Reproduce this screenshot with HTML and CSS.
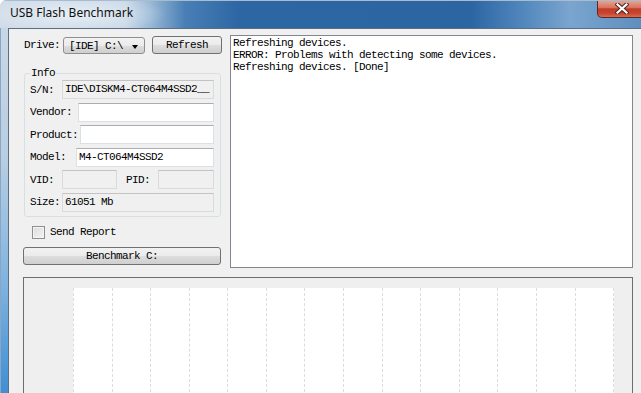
FILE: index.html
```html
<!DOCTYPE html>
<html>
<head>
<meta charset="utf-8">
<title>USB Flash Benchmark</title>
<link rel="stylesheet" href="styles.css">
</head>
<body>
<div class="window">
  <div class="titlebar">
    <span class="title">USB Flash Benchmark</span>
    <div class="close">
      <svg width="14" height="11" viewBox="0 0 14 11">
        <path d="M2.5 1.5 L11.5 9.5 M11.5 1.5 L2.5 9.5" stroke="#4b2620" stroke-width="4.2" stroke-linecap="square" fill="none"/>
        <path d="M2.5 1.5 L11.5 9.5 M11.5 1.5 L2.5 9.5" stroke="#ffffff" stroke-width="2.2" stroke-linecap="square" fill="none"/>
      </svg>
    </div>
  </div>
  <div class="frame">
    <div class="side"></div>
    <div class="client">
      <div class="top">
        <div class="left">
          <div class="drive-row">
            <span class="drive-lbl">Drive:</span>
            <div class="combo"><span class="combo-text">[IDE] C:\</span><span class="arrow"></span></div>
            <div class="btn refresh">Refresh</div>
          </div>
          <fieldset class="info">
            <legend>Info</legend>
            <div class="row"><span class="lbl w-sn">S/N:</span><div class="field ro">IDE\DISKM4-CT064M4SSD2__</div></div>
            <div class="row"><span class="lbl w-vendor">Vendor:</span><div class="field"></div></div>
            <div class="row"><span class="lbl w-product">Product:</span><div class="field"></div></div>
            <div class="row"><span class="lbl w-model">Model:</span><div class="field">M4-CT064M4SSD2</div></div>
            <div class="row"><span class="lbl w-sn">VID:</span><div class="field ro vid"></div><span class="lbl w-pid">PID:</span><div class="field ro"></div></div>
            <div class="row"><span class="lbl w-sn">Size:</span><div class="field ro">61051 Mb</div></div>
          </fieldset>
          <div class="check"><span class="box"></span><span>Send Report</span></div>
          <div class="btn bench">Benchmark C:</div>
        </div>
        <div class="log">
          <div class="line">Refreshing devices.</div>
          <div class="line">ERROR: Problems with detecting some devices.</div>
          <div class="line">Refreshing devices. [Done]</div>
        </div>
      </div>
      <div class="chart">
        <div class="plot">
          <div class="col"></div><div class="col"></div><div class="col"></div><div class="col"></div>
          <div class="col"></div><div class="col"></div><div class="col"></div><div class="col"></div>
          <div class="col"></div><div class="col"></div><div class="col"></div><div class="col"></div>
          <div class="col"></div><div class="col last"></div>
        </div>
      </div>
    </div>
  </div>
</div>
</body>
</html>
```

FILE: styles.css
```css
* { box-sizing: border-box; }

body {
  margin: 0;
  width: 641px;
  height: 393px;
  overflow: hidden;
  background: #ffffff;
  font-family: "Liberation Mono", monospace;
  font-size: 11px;
  letter-spacing: -0.6px;
  color: #000;
}

.window {
  display: flex;
  flex-direction: column;
  width: 641px;
  height: 393px;
  border-top-left-radius: 6px;
  overflow: hidden;
}

.titlebar {
  height: 28px;
  flex-shrink: 0;
  display: flex;
  align-items: flex-start;
  overflow: hidden;
  border-top: 1px solid #a9bccf;
  background:
    radial-gradient(ellipse 95px 20px at 72px 13px, rgba(236,242,248,0.85), rgba(236,242,248,0)),
    linear-gradient(to right, #cfdbe7 0px, #c7d7e6 125px, #9ab9d6 150px, #4a7fb5 185px, #2c66a3 240px, #2b65a2 470px, #4f85bb 520px, #7aa5cf 570px, #6e9bc8 600px, #5f8fbf 641px);
}

.title {
  font-family: "Segoe UI", "Noto Sans", sans-serif;
  font-size: 12px;
  letter-spacing: 0;
  line-height: 14px;
  padding: 5px 0 0 10px;
  color: #111;
}

.close {
  margin-left: auto;
  margin-right: -6px;
  margin-top: -1px;
  width: 50px;
  height: 18px;
  flex-shrink: 0;
  display: flex;
  align-items: center;
  justify-content: center;
  border: 1px solid #5b2a24;
  border-top: none;
  border-bottom-left-radius: 5px;
  background: linear-gradient(to bottom, #e7aa98 0%, #d7735f 45%, #c23b29 52%, #c9462f 80%, #d86c54 100%);
}

.frame {
  flex: 1;
  display: flex;
  min-height: 0;
}

.side {
  width: 8px;
  flex-shrink: 0;
  border-left: 1px solid #8aa6c2;
  background: linear-gradient(to bottom, #c8d7e6 0%, #b9cee2 35%, #7fb3e0 70%, #3f8fd4 100%);
}

.client {
  flex: 1;
  background: #f0f0f0;
  border-left: 1px solid #5e6e80;
  border-top: 1px solid #5e6e80;
}

.top {
  display: flex;
  gap: 8px;
  padding: 6px 0 0 14px;
}

.left {
  width: 199px;
  display: flex;
  flex-direction: column;
}

.drive-row {
  display: flex;
  align-items: flex-start;
  height: 18px;
  margin-top: 1px;
}

.drive-lbl {
  width: 40px;
  padding-left: 1px;
  line-height: 18px;
}

.combo {
  width: 82px;
  height: 17px;
  margin-top: 1px;
  display: flex;
  align-items: center;
  justify-content: space-between;
  padding: 0 6px 0 5px;
  border: 1px solid #8e8f8f;
  border-radius: 3px;
  background: linear-gradient(to bottom, #f2f2f2 0%, #ebebeb 50%, #dddddd 51%, #cfcfcf 100%);
}

.arrow {
  width: 0;
  height: 0;
  border-left: 3.5px solid transparent;
  border-right: 3.5px solid transparent;
  border-top: 4px solid #000;
  margin-top: 2px;
}

.btn {
  display: flex;
  align-items: center;
  justify-content: center;
  border: 1px solid #707070;
  border-radius: 3px;
  background: linear-gradient(to bottom, #f2f2f2 0%, #ebebeb 50%, #dddddd 51%, #cfcfcf 100%);
}

.refresh {
  width: 70px;
  height: 18px;
  margin-left: 7px;
}

.info {
  margin: 13px 0 0 1px;
  width: 197px;
  padding: 1px 6px 4px 5px;
  border: 1px solid #d5dfe5;
  border-radius: 3px;
  display: flex;
  flex-direction: column;
  gap: 3.6px;
}

.info legend {
  padding: 0 1px;
  line-height: 12px;
}

.row {
  display: flex;
  align-items: center;
  height: 19px;
}

.lbl { flex-shrink: 0; }
.w-sn { width: 32px; }
.w-vendor { width: 48px; }
.w-product { width: 50px; }
.w-model { width: 46px; }
.w-pid { width: 41px; padding-left: 9px; }

.field {
  flex: 1;
  height: 19px;
  line-height: 17px;
  padding-left: 2px;
  white-space: nowrap;
  overflow: hidden;
  background: #ffffff;
  border: 1px solid #dbdfe6;
  border-top-color: #abadb3;
}

.field.ro {
  background: #f0f0f0;
  border-color: #dadada;
  border-top-color: #c3c3c3;
}

.field.vid {
  flex: 0 0 55px;
}

.check {
  display: flex;
  align-items: center;
  gap: 5px;
  margin: 9px 0 0 9px;
  height: 13px;
}

.box {
  width: 13px;
  height: 13px;
  border: 1px solid #8e8f8f;
  background: linear-gradient(135deg, #dcdcdc 0%, #f4f4f4 100%);
  box-shadow: inset 0 0 0 1px #f4f4f4;
}

.bench {
  width: 198px;
  height: 18px;
  margin-top: 8px;
}

.log {
  width: 403px;
  height: 233px;
  background: #ffffff;
  border: 1px solid #82878f;
  padding: 1px 2px;
  line-height: 12px;
}

.line {
  white-space: nowrap;
}

.chart {
  margin: 9px 0 0 14px;
  width: 610px;
  height: 200px;
  border: 1px solid #6e6e6e;
  background: #efefef;
  padding: 10px 0 0 49px;
}

.plot {
  width: 541px;
  height: 190px;
  background: #ffffff;
  display: flex;
}

.col {
  flex: 1;
  border-left: 1px dashed #dcdcdc;
}

.col.last {
  border-right: 1px dashed #dcdcdc;
}
```
